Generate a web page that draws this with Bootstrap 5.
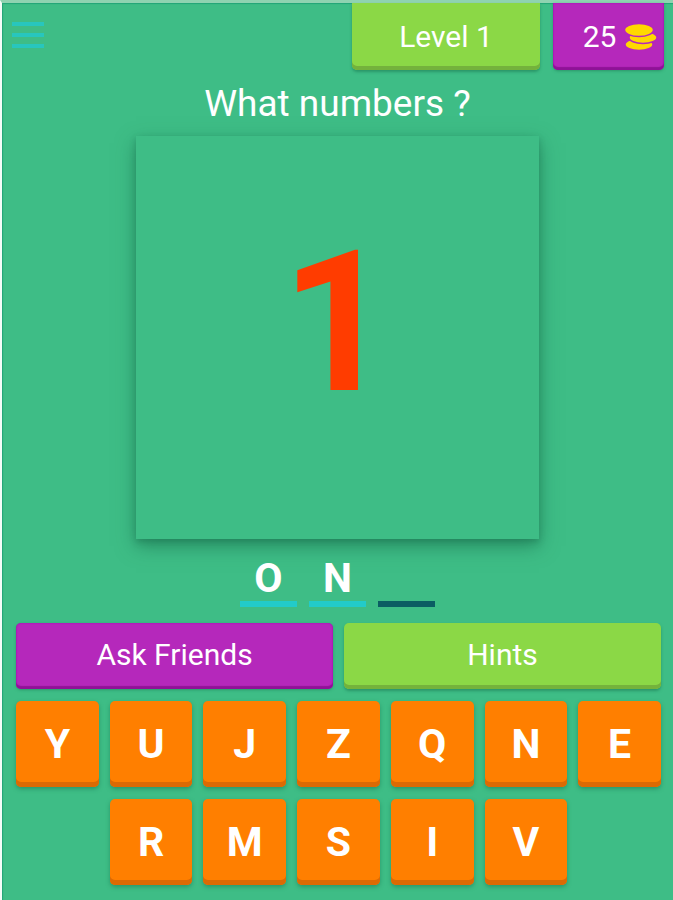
<!DOCTYPE html>
<html lang="en">
<head>
<meta charset="utf-8">
<meta name="viewport" content="width=device-width, initial-scale=1">
<title>What numbers ?</title>
<link href="https://cdn.jsdelivr.net/npm/bootstrap@5.3.0/dist/css/bootstrap.min.css" rel="stylesheet">
<style>
  body { font-family: Roboto, "Liberation Sans", sans-serif; background: #3ebd86; color: #fff; }
  .game { border-left: 2px solid #f4fcf8; border-top: 3px solid #8fd3b1; box-shadow: inset 1px 1px 1px #22a577; }
  .menu-btn { padding: 17px 9px; }
  .tile { --bs-btn-color: #fff; --bs-btn-hover-color: #fff; --bs-btn-active-color: #fff; --bs-btn-border-width: 0; --bs-btn-border-radius: 5px; padding: 0; line-height: 36px; }
  .tile-green { background: #8bd846 !important; box-shadow: inset 0 -4px #74b23c, 0 2px 3px #1d7d5599; }
  .tile-purple { background: #b528bb !important; box-shadow: inset 0 -3px 1px #8f1297, inset 0 0 2px #a800b8, 0 1px 3px #1d7d5599; }
  .tile-orange { background: #ff7f00 !important; box-shadow: inset 0 -5px #db6a04, 0 2px 4px #1d7d5599; }
  .tab-tile { height: 67px; border-radius: 0 0 5px 5px; font-size: 30px; }
  .level-tile { width: 188px; }
  .coin-tile { width: 111px; padding-left: 24px; }
  .action-tile { height: 66px; padding-bottom: 2px; font-size: 30px; }
  .top-bar { gap: 13px; padding-right: 9px; }
  .question { padding-top: 2px; font-size: 37px; line-height: 64px; }
  .board { width: 60%; aspect-ratio: 1; padding-bottom: 28px; box-shadow: 0 7px 18px #1464468c, 0 3px 6px #1464464d; }
  .board-figure { font-size: 196px; line-height: 200px; color: #ff3c00; }
  .answer { gap: 12px; padding-top: 16px; }
  .slot { width: 57px; height: 52px; border-bottom: 6px solid #22cbc9; font-size: 41px; line-height: 46px; }
  .slot-empty { border-color: #0b5d63; }
  .controls { padding: 16px 12px 14px 14px; gap: 12px; }
  .tile-row { gap: 11px; }
  .key-tile { width: calc((100% - 66px) / 7); height: 86px; font-size: 41px; }
</style>
<script src="https://cdn.jsdelivr.net/npm/bootstrap@5.3.0/dist/js/bootstrap.bundle.min.js"></script>
</head>
<body>
<div class="game min-vh-100 d-flex flex-column">
  <header class="top-bar d-flex align-items-start">
    <button type="button" class="menu-btn btn border-0 me-auto d-flex" aria-label="Menu">
      <svg width="34" height="30" viewBox="0 0 34 30" fill="#28c6bd" aria-hidden="true"><path d="M1 2h32v4H1zM1 13h32v4H1zM1 24h32v4H1z"/></svg>
    </button>
    <button type="button" class="tile tab-tile level-tile tile-green btn">Level 1</button>
    <button type="button" class="tile tab-tile coin-tile tile-purple btn d-flex align-items-center justify-content-center">
      <span>25</span>
      <svg class="ms-2" width="34" height="28" viewBox="0 0 34 28" aria-hidden="true">
        <g fill="#ffd800" stroke="#b528bb" stroke-width="1.500">
          <ellipse cx="15" cy="21.500" rx="14" ry="6"/>
          <ellipse cx="19" cy="14.500" rx="14" ry="6"/>
          <ellipse cx="15" cy="7" rx="14.500" ry="6.500"/>
        </g>
      </svg>
    </button>
  </header>
  <main class="d-flex flex-column">
    <h1 class="question fw-normal text-center m-0">What numbers ?</h1>
    <div class="board mx-auto d-flex align-items-center justify-content-center">
      <span class="board-figure fw-bold">1</span>
    </div>
    <div class="answer d-flex justify-content-center fw-bold text-center">
      <div class="slot">O</div>
      <div class="slot">N</div>
      <div class="slot slot-empty"></div>
    </div>
    <div class="controls d-flex flex-column">
      <div class="tile-row d-flex">
        <button type="button" class="tile action-tile tile-purple btn flex-fill w-50">Ask Friends</button>
        <button type="button" class="tile action-tile tile-green btn flex-fill w-50">Hints</button>
      </div>
      <div class="tile-row d-flex justify-content-center">
        <button type="button" class="tile key-tile tile-orange btn fw-bold">Y</button>
        <button type="button" class="tile key-tile tile-orange btn fw-bold">U</button>
        <button type="button" class="tile key-tile tile-orange btn fw-bold">J</button>
        <button type="button" class="tile key-tile tile-orange btn fw-bold">Z</button>
        <button type="button" class="tile key-tile tile-orange btn fw-bold">Q</button>
        <button type="button" class="tile key-tile tile-orange btn fw-bold">N</button>
        <button type="button" class="tile key-tile tile-orange btn fw-bold">E</button>
      </div>
      <div class="tile-row d-flex justify-content-center">
        <button type="button" class="tile key-tile tile-orange btn fw-bold">R</button>
        <button type="button" class="tile key-tile tile-orange btn fw-bold">M</button>
        <button type="button" class="tile key-tile tile-orange btn fw-bold">S</button>
        <button type="button" class="tile key-tile tile-orange btn fw-bold">I</button>
        <button type="button" class="tile key-tile tile-orange btn fw-bold">V</button>
      </div>
    </div>
  </main>
</div>
</body>
</html>
